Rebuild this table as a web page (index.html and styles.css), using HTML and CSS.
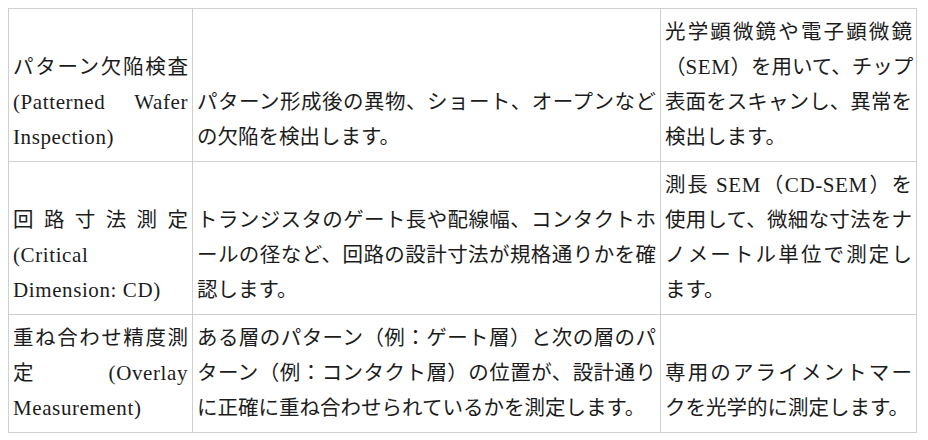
FILE: index.html
```html
<!DOCTYPE html>
<html lang="ja">
<head>
<meta charset="utf-8">
<title>検査・計測</title>
<link rel="stylesheet" href="styles.css">
</head>
<body>
<table class="spec">
  <colgroup>
    <col class="c-name">
    <col class="c-desc">
    <col class="c-tool">
  </colgroup>
  <tbody>
    <tr>
      <td>
        <span class="line">パターン欠陥検査</span>
        <span class="line"><span class="en">(Patterned Wafer</span></span>
        <span class="line"><span class="en">Inspection)</span></span>
      </td>
      <td>
        <span class="line">パターン形成後の異物、ショート、オープンなど</span>
        <span class="line">の欠陥を検出します。</span>
      </td>
      <td>
        <span class="line">光学顕微鏡や電子顕微鏡</span>
        <span class="line">（<span class="en">SEM</span>）を用いて、チップ</span>
        <span class="line">表面をスキャンし、異常を</span>
        <span class="line">検出します。</span>
      </td>
    </tr>
    <tr>
      <td>
        <span class="line">回路寸法測定</span>
        <span class="line"><span class="en">(Critical</span></span>
        <span class="line"><span class="en">Dimension: CD)</span></span>
      </td>
      <td>
        <span class="line">トランジスタのゲート長や配線幅、コンタクトホ</span>
        <span class="line">ールの径など、回路の設計寸法が規格通りかを確</span>
        <span class="line">認します。</span>
      </td>
      <td>
        <span class="line">測長 <span class="en">SEM</span>（<span class="en">CD-SEM</span>）を</span>
        <span class="line">使用して、微細な寸法をナ</span>
        <span class="line">ノメートル単位で測定し</span>
        <span class="line">ます。</span>
      </td>
    </tr>
    <tr>
      <td>
        <span class="line">重ね合わせ精度測</span>
        <span class="line">定<span class="en">(Overlay</span></span>
        <span class="line"><span class="en">Measurement)</span></span>
      </td>
      <td>
        <span class="line">ある層のパターン（例：ゲート層）と次の層のパ</span>
        <span class="line">ターン（例：コンタクト層）の位置が、設計通り</span>
        <span class="line">に正確に重ね合わせられているかを測定します。</span>
      </td>
      <td>
        <span class="line">専用のアライメントマー</span>
        <span class="line">クを光学的に測定します。</span>
      </td>
    </tr>
  </tbody>
</table>
</body>
</html>
```

FILE: styles.css
```css
html, body {
  background: #ffffff;
}

body {
  margin: 8px;
  color: #1c1c1c;
  font-family: "Liberation Serif", "Noto Sans CJK JP", serif;
  font-size: 20.5px;
  line-height: 35px;
}

.spec {
  border-collapse: collapse;
  table-layout: fixed;
  width: 908px;
}

.c-name { width: 184px; }
.c-desc { width: 468px; }
.c-tool { width: 256px; }

.spec td {
  border: 1px solid #cfcfcf;
  padding: 6px 4px;
  vertical-align: bottom;
  font-weight: 400;
}

.line {
  display: block;
  white-space: nowrap;
  text-align: justify;
  text-align-last: justify;
}

.line:last-child {
  text-align-last: left;
}

.en {
  font-size: 21px;
  letter-spacing: 0.6px;
}
```
